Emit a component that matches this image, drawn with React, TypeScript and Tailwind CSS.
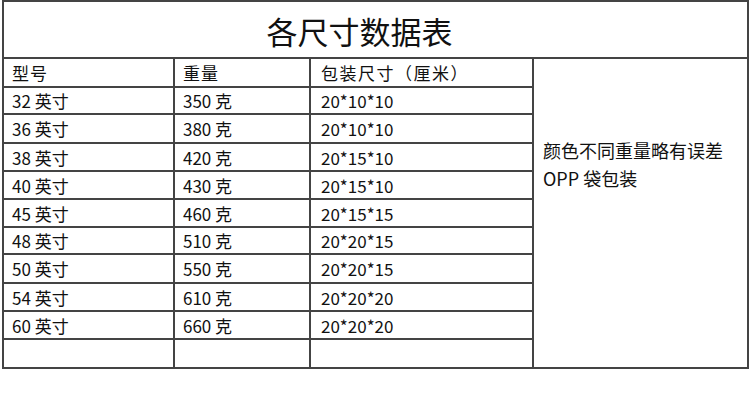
const rows = [
  ['32 英寸', '350 克', '20*10*10'],
  ['36 英寸', '380 克', '20*10*10'],
  ['38 英寸', '420 克', '20*15*10'],
  ['40 英寸', '430 克', '20*15*10'],
  ['45 英寸', '460 克', '20*15*15'],
  ['48 英寸', '510 克', '20*20*15'],
  ['50 英寸', '550 克', '20*20*15'],
  ['54 英寸', '610 克', '20*20*20'],
  ['60 英寸', '660 克', '20*20*20'],
  ['', '', ''],
];

// the source sheet has slightly uneven row heights
const heights = ['h-[27px]', 'h-[29px]', 'h-[28px]', 'h-[28px]', 'h-[28px]', 'h-[27px]', 'h-[29px]', 'h-[28px]', 'h-[28px]', 'h-[29px]'];

const cell = 'border-2 border-[#444] px-[8px] align-middle whitespace-nowrap';

export default function App() {
  return (
    <div className="h-[400px] w-[751px] bg-white pl-[2px] text-[#111] [font-family:'Noto_Sans_CJK_SC','Noto_Sans',sans-serif]">
      <table className="w-[745px] table-fixed border-collapse text-[17px] leading-none">
        <colgroup>
          <col className="w-[171px]" />
          <col className="w-[136px]" />
          <col className="w-[223px]" />
          <col className="w-[215px]" />
        </colgroup>
        <tbody>
          <tr className="h-[57px]">
            <td colSpan={4} className="border-2 border-[#444] pt-[1px] pr-[32px] text-center align-middle text-[31px]">
              各尺寸数据表
            </td>
          </tr>
          <tr className="h-[29px]">
            <td className={cell + ' tracking-[1px]'}>型号</td>
            <td className={cell + ' tracking-[1px]'}>重量</td>
            <td className={cell + ' px-[10px] tracking-[1.5px]'}>包装尺寸（厘米）</td>
            <td rowSpan={11} className="border-2 border-[#444] px-[9px] pt-[77px] align-top text-[18px] leading-[28px]">
              <div>颜色不同重量略有误差</div>
              <div>OPP 袋包装</div>
            </td>
          </tr>
          {rows.map((r, i) => (
            <tr key={i} className={heights[i]}>
              <td className={cell}>{r[0]}</td>
              <td className={cell}>{r[1]}</td>
              <td className={cell + ' px-[10px]'}>{r[2]}</td>
            </tr>
          ))}
        </tbody>
      </table>
    </div>
  );
}
